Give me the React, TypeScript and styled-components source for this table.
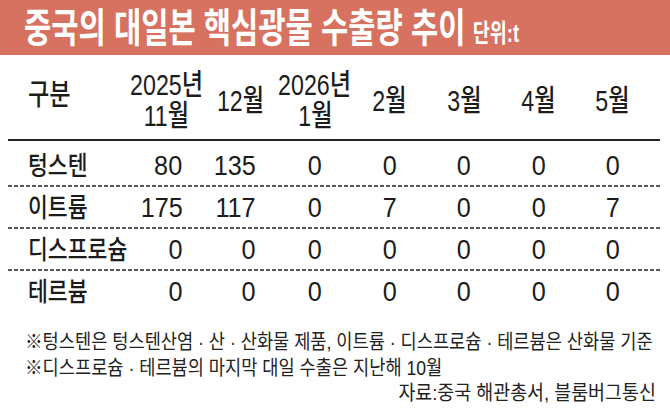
import React from 'react';
import styled, { createGlobalStyle } from 'styled-components';

const Global = createGlobalStyle`
  html, body { margin: 0; padding: 0; background: #ffffff; overflow: hidden; }
  body {
    width: 670px;
    height: 417px;
    font-family: "Liberation Sans", "Noto Sans CJK KR", sans-serif;
    color: #1c1c1c;
  }
`;

const Page = styled.div`
  width: 670px;
  height: 417px;
  display: flex;
  flex-direction: column;
`;

const Squeeze = styled.span<{ $sx: number; $origin?: string }>`
  display: inline-block;
  white-space: nowrap;
  transform: scaleX(${(p) => p.$sx});
  transform-origin: ${(p) => p.$origin ?? 'center'};
`;

const Banner = styled.header`
  height: 55px;
  flex: 0 0 55px;
  box-sizing: border-box;
  background: #d6725f;
  display: flex;
  align-items: center;
  padding-left: 24px;
`;

const Title = styled.span`
  font-size: 40px;
  line-height: 1;
  font-weight: 700;
  color: #ffffff;
`;

const Unit = styled.span`
  font-size: 25px;
  line-height: 1;
  font-weight: 700;
  color: #ffffff;
  margin-left: 10px;
`;

const Table = styled.div`
  margin: 0 10px 0 8px;
  display: flex;
  flex-direction: column;
`;

const HeadRow = styled.div`
  display: grid;
  grid-template-columns: 121px repeat(7, minmax(0, 1fr));
  padding: 8px 10px 0 0;
  height: 86px;
  box-sizing: border-box;
  align-items: center;
  border-bottom: 2px solid #222222;
  font-size: 29px;
  font-weight: 500;
  line-height: 31px;
`;

const BodyRow = styled.div<{ $first?: boolean; $dashed?: boolean }>`
  display: grid;
  grid-template-columns: 121px repeat(7, minmax(0, 1fr));
  padding-right: 10px;
  height: 42px;
  margin-top: ${(p) => (p.$first ? '4px' : '0')};
  align-items: center;
  background-image: ${(p) =>
    p.$dashed ? 'linear-gradient(to right, #5a5a5a 0 4px, transparent 4px 6px)' : 'none'};
  background-size: 6px 2px;
  background-repeat: repeat-x;
  background-position: left bottom;
`;

const LabelCell = styled.div<{ $lift?: number }>`
  padding-left: 20px;
  margin-bottom: ${(p) => p.$lift ?? 0}px;
  display: flex;
  justify-content: flex-start;
`;

const HeadCell = styled.div`
  display: flex;
  flex-direction: column;
  align-items: center;
  text-align: center;
`;

const NumCell = styled.div<{ $right?: number }>`
  display: flex;
  justify-content: ${(p) => (p.$right !== undefined ? 'flex-end' : 'center')};
  padding-right: ${(p) => p.$right ?? 0}px;
`;

const LabelText = styled.span`
  font-size: 26px;
  font-weight: 500;
  line-height: 1;
`;

const NumText = styled.span`
  font-size: 28px;
  line-height: 1;
`;

const Notes = styled.div`
  margin-top: 17px;
  padding: 0 14px 0 25px;
  display: flex;
  flex-direction: column;
  font-size: 20px;
  color: #222222;
`;

const NoteLine = styled.div<{ $right?: boolean }>`
  height: 25.5px;
  line-height: 25.5px;
  display: flex;
  justify-content: ${(p) => (p.$right ? 'flex-end' : 'flex-start')};
`;

const headers: string[][] = [
  ['2025년', '11월'],
  ['12월'],
  ['2026년', '1월'],
  ['2월'],
  ['3월'],
  ['4월'],
  ['5월'],
];

const rows: string[][] = [
  ['텅스텐', '80', '135', '0', '0', '0', '0', '0'],
  ['이트륨', '175', '117', '0', '7', '0', '0', '7'],
  ['디스프로슘', '0', '0', '0', '0', '0', '0', '0'],
  ['테르븀', '0', '0', '0', '0', '0', '0', '0'],
];

const rightPad: (number | undefined)[] = [21, 22, undefined, undefined, undefined, undefined, undefined];

export default function App() {
  return (
    <Page>
      <Global />
      <Banner>
        <Squeeze $sx={0.74} $origin="left">
          <Title>중국의 대일본 핵심광물 수출량 추이</Title>
          <Unit>단위:t</Unit>
        </Squeeze>
      </Banner>
      <Table>
        <HeadRow>
          <LabelCell $lift={12}>
            <Squeeze $sx={0.8} $origin="left">구분</Squeeze>
          </LabelCell>
          {headers.map((h, i) => (
            <HeadCell key={i}>
              {h.map((line, j) => (
                <Squeeze key={j} $sx={0.8}>
                  {line}
                </Squeeze>
              ))}
            </HeadCell>
          ))}
        </HeadRow>
        {rows.map((r, ri) => (
          <BodyRow key={ri} $first={ri === 0} $dashed={ri < rows.length - 1}>
            <LabelCell>
              <Squeeze $sx={0.83} $origin="left">
                <LabelText>{r[0]}</LabelText>
              </Squeeze>
            </LabelCell>
            {r.slice(1).map((v, ci) => (
              <NumCell key={ci} $right={rightPad[ci]}>
                <Squeeze $sx={0.9} $origin={rightPad[ci] !== undefined ? 'right' : 'center'}>
                  <NumText>{v}</NumText>
                </Squeeze>
              </NumCell>
            ))}
          </BodyRow>
        ))}
      </Table>
      <Notes>
        <NoteLine>
          <Squeeze $sx={0.88} $origin="left">
            ※텅스텐은 텅스텐산염 · 산 · 산화물 제품, 이트륨 · 디스프로슘 · 테르븀은 산화물 기준
          </Squeeze>
        </NoteLine>
        <NoteLine>
          <Squeeze $sx={0.88} $origin="left">
            ※디스프로슘 · 테르븀의 마지막 대일 수출은 지난해 10월
          </Squeeze>
        </NoteLine>
        <NoteLine $right>
          <Squeeze $sx={0.92} $origin="right">
            자료:중국 해관총서, 블룸버그통신
          </Squeeze>
        </NoteLine>
      </Notes>
    </Page>
  );
}
